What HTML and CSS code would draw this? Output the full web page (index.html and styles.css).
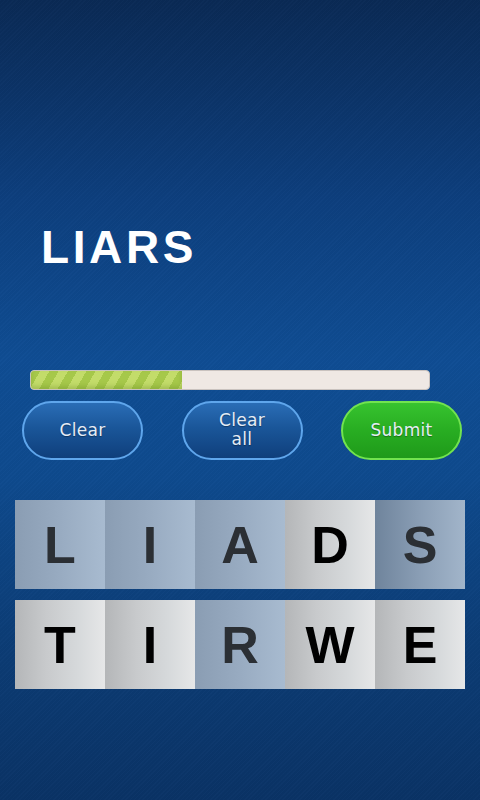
FILE: index.html
```html
<!DOCTYPE html>
<html>
<head>
<meta charset="utf-8">
<link rel="stylesheet" href="styles.css">
</head>
<body>
<div class="screen">
  <h1 class="word">LIARS</h1>
  <div class="progress"><div class="progress-fill" style="width: 38%"></div></div>
  <div class="buttons">
    <button class="btn btn-blue">Clear</button>
    <button class="btn btn-blue btn-two">Clear<br>all</button>
    <button class="btn btn-green">Submit</button>
  </div>
  <div class="board">
    <div class="row">
      <div class="tile blue">L</div>
      <div class="tile blue">I</div>
      <div class="tile blue">A</div>
      <div class="tile silver">D</div>
      <div class="tile blue dark">S</div>
    </div>
    <div class="row">
      <div class="tile silver">T</div>
      <div class="tile silver">I</div>
      <div class="tile blue">R</div>
      <div class="tile silver">W</div>
      <div class="tile silver">E</div>
    </div>
  </div>
</div>
</body>
</html>
```

FILE: styles.css
```css
html, body {
  margin: 0;
  padding: 0;
}
body {
  width: 480px;
  height: 800px;
  overflow: hidden;
  background:
    repeating-linear-gradient(135deg, rgba(255,255,255,0.012) 0 1px, rgba(0,0,0,0.018) 1px 3px),
    linear-gradient(180deg, #0a2a55 0%, #0d3f7e 25%, #0f4d94 45%, #0e4a8e 60%, #0c3d76 80%, #0a3366 100%);
  font-family: "Liberation Sans", Arial, sans-serif;
}
.screen {
  display: flex;
  flex-direction: column;
  padding-top: 219px;
}
.word {
  margin: 0 0 0 41px;
  color: #ffffff;
  font-size: 46px;
  font-weight: bold;
  line-height: 56px;
  letter-spacing: 3.6px;
}
.progress {
  margin: 95px 0 0 30px;
  width: 400px;
  height: 20px;
  box-sizing: border-box;
  border-radius: 4px;
  background: #efe8e4;
  border: 1px solid #c9c2bf;
  overflow: hidden;
}
.progress-fill {
  height: 100%;
  background:
    repeating-linear-gradient(120deg, #a6c84a 0 8px, #c3dc6a 8px 16px);
  box-shadow: inset 0 -3px 4px rgba(80,110,20,0.25);
}
.buttons {
  display: flex;
  justify-content: space-between;
  margin: 11px 18px 0 22px;
}
.btn {
  width: 121px;
  height: 59px;
  border-radius: 30px;
  box-sizing: border-box;
  font-family: "DejaVu Sans", sans-serif;
  font-size: 17px;
  line-height: 19px;
  color: #e6edf5;
  text-shadow: 0 1px 1px rgba(0,0,0,0.35);
  padding: 0;
  letter-spacing: 0.3px;
}
.btn-blue {
  border: 2px solid #5fa6ec;
  background: linear-gradient(180deg, #2a6db6 0%, #1a5699 45%, #0f3f7c 100%);
}
.btn-two {
  padding-bottom: 2px;
}
.btn-green {
  border: 2px solid #72e34f;
  background: linear-gradient(180deg, #37c32f 0%, #28ad22 50%, #1f9a1a 100%);
}
.board {
  display: flex;
  flex-direction: column;
  gap: 11px;
  margin: 40px 0 0 15px;
}
.row {
  display: flex;
  width: 450px;
  height: 89px;
}
.tile {
  flex: 1;
  display: flex;
  align-items: center;
  justify-content: center;
  font-size: 52px;
  font-weight: bold;
  box-sizing: border-box;
}
.blue {
  color: #2b2f34;
  background: linear-gradient(90deg, #8a9db3 0%, #98abc1 50%, #a8bbd0 100%);
}
.blue.dark {
  background: linear-gradient(90deg, #6f849c 0%, #8a9eb5 50%, #a2b5ca 100%);
}
.silver {
  color: #000;
  background: linear-gradient(90deg, #b4b6b8 0%, #c8cacc 35%, #d6d9db 70%, #e6e7e8 100%);
}
```
